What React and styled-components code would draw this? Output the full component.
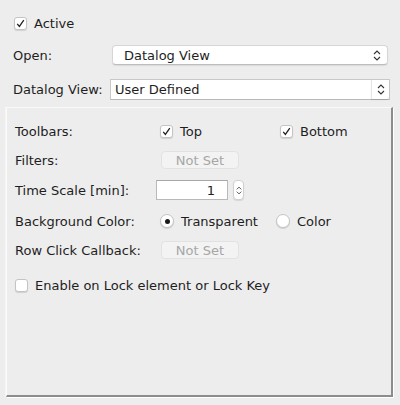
import React from 'react';
import styled, { createGlobalStyle, css } from 'styled-components';

const GlobalStyle = createGlobalStyle`
  html, body {
    margin: 0;
    padding: 0;
    background: #ededed;
  }
  body {
    font-family: 'DejaVu Sans', 'Liberation Sans', sans-serif;
    font-size: 13px;
    color: #1e1e1e;
  }
`;

const Page = styled.div`
  width: 400px;
  height: 405px;
  box-sizing: border-box;
  padding-top: 16px;
  display: flex;
  flex-direction: column;
`;

const Row = styled.div`
  display: flex;
  align-items: center;
  height: ${(p) => p.h || 20}px;
  margin-top: ${(p) => p.mt || 0}px;
  padding-left: ${(p) => p.pl || 0}px;
`;

const Label = styled.span`
  width: ${(p) => p.w}px;
  flex-shrink: 0;
  white-space: nowrap;
`;

const Text = styled.span`
  white-space: nowrap;
  margin-left: ${(p) => p.ml || 7}px;
`;

const boxBase = css`
  width: 13px;
  height: 13px;
  box-sizing: border-box;
  background: #fff;
  border: 1px solid #c4c4c4;
  box-shadow: 0 1px 1px rgba(0, 0, 0, 0.12);
  display: flex;
  align-items: center;
  justify-content: center;
  flex-shrink: 0;
`;

const Box = styled.span`
  ${boxBase};
  border-radius: 3px;
  margin-left: ${(p) => p.ml || 0}px;
`;

const Radio = styled.span`
  ${boxBase};
  width: 14px;
  height: 14px;
  border-radius: 50%;
  margin-left: ${(p) => p.ml || 0}px;
`;

const Dot = styled.span`
  width: 5px;
  height: 5px;
  border-radius: 50%;
  background: #1a1a1a;
`;

const Check = () => (
  <svg width="9" height="9" viewBox="0 0 9 9">
    <path d="M1.2 4.8 L3.4 7.4 L7.8 1.2" fill="none" stroke="#222" strokeWidth="1.3" />
  </svg>
);

const UpDown = ({ w = 8, h = 11 }) => (
  <svg width={w} height={h} viewBox="0 0 8 11">
    <path d="M1 4 L4 1 L7 4 M1 7 L4 10 L7 7" fill="none" stroke="#333" strokeWidth="1.1" />
  </svg>
);

const Popup = styled.div`
  margin-left: ${(p) => p.ml || 0}px;
  width: ${(p) => p.w}px;
  height: 20px;
  box-sizing: border-box;
  background: #fff;
  border-radius: 4px;
  border: 1px solid #d6d6d6;
  border-bottom-color: #bdbdbd;
  box-shadow: 0 1px 1px rgba(0, 0, 0, 0.08);
  display: flex;
  align-items: center;
  justify-content: space-between;
  padding: 0 6px 0 11px;
`;

const Combo = styled.div`
  margin-left: ${(p) => p.ml || 0}px;
  width: ${(p) => p.w}px;
  height: 21px;
  box-sizing: border-box;
  background: #fff;
  border: 1px solid #c8c8c8;
  border-bottom-color: #b8b8b8;
  display: flex;
  align-items: stretch;
`;

const ComboText = styled.div`
  flex: 1;
  display: flex;
  align-items: center;
  padding-left: 4px;
`;

const ComboArrow = styled.div`
  width: 17px;
  display: flex;
  align-items: center;
  justify-content: center;
  border-left: 1px solid #e6e6e6;
  border-radius: 0 3px 3px 0;
  box-shadow: 0 1px 1px rgba(0, 0, 0, 0.12);
`;

const Panel = styled.div`
  margin: 7px 0 0 6px;
  width: 387px;
  height: 290px;
  box-sizing: border-box;
  border-top: 1px solid #fafafa;
  border-left: 1px solid #fafafa;
  border-right: 2px solid #8c8c8c;
  border-bottom: 2px solid #8c8c8c;
  box-shadow: 1px 1px 0 #fff, -1px 0 0 #f6f6f6;
  padding: 13px 0 0 8px;
  display: flex;
  flex-direction: column;
`;

const Group = styled.div`
  display: flex;
  align-items: center;
  width: ${(p) => p.w}px;
`;

const DisabledButton = styled.div`
  margin-left: ${(p) => p.ml || 0}px;
  width: 78px;
  height: 18px;
  box-sizing: border-box;
  border-radius: 4px;
  background: #f3f3f3;
  border: 1px solid #e2e2e2;
  color: #a6a6a6;
  display: flex;
  align-items: center;
  justify-content: center;
`;

const Field = styled.div`
  margin-left: ${(p) => p.ml || 0}px;
  width: 72px;
  height: 20px;
  box-sizing: border-box;
  background: #fff;
  border: 1px solid #b9b9b9;
  border-top-color: #a8a8a8;
  display: flex;
  align-items: center;
  justify-content: flex-end;
  padding-right: 12px;
`;

const Stepper = styled.div`
  margin-left: 5px;
  width: 11px;
  height: 20px;
  box-sizing: border-box;
  background: #fff;
  border: 1px solid #d0d0d0;
  border-radius: 4px;
  box-shadow: 0 1px 1px rgba(0, 0, 0, 0.1);
  display: flex;
  align-items: center;
  justify-content: center;
`;

export default function App() {
  return (
    <>
      <GlobalStyle />
      <Page>
        <Row h={14} pl={14}>
          <Box><Check /></Box>
          <Text>Active</Text>
        </Row>
        <Row mt={15} pl={13}>
          <Label w={99}>Open:</Label>
          <Popup w={276}>
            <span>Datalog View</span>
            <UpDown />
          </Popup>
        </Row>
        <Row h={21} mt={14} pl={13}>
          <Label w={97}>Datalog View:</Label>
          <Combo w={280}>
            <ComboText>User Defined</ComboText>
            <ComboArrow><UpDown /></ComboArrow>
          </Combo>
        </Row>
        <Panel>
          <Row>
            <Label w={145}>Toolbars:</Label>
            <Group w={120}>
              <Box><Check /></Box>
              <Text>Top</Text>
            </Group>
            <Box><Check /></Box>
            <Text>Bottom</Text>
          </Row>
          <Row mt={9}>
            <Label w={145}>Filters:</Label>
            <DisabledButton ml={1}>Not Set</DisabledButton>
          </Row>
          <Row mt={10}>
            <Label w={141}>Time Scale [min]:</Label>
            <Field>1</Field>
            <Stepper><UpDown w={6} h={11} /></Stepper>
          </Row>
          <Row mt={11}>
            <Label w={145}>Background Color:</Label>
            <Group w={116}>
              <Radio><Dot /></Radio>
              <Text>Transparent</Text>
            </Group>
            <Radio />
            <Text>Color</Text>
          </Row>
          <Row mt={9}>
            <Label w={145}>Row Click Callback:</Label>
            <DisabledButton ml={1}>Not Set</DisabledButton>
          </Row>
          <Row mt={15}>
            <Box><span /></Box>
            <Text>Enable on Lock element or Lock Key</Text>
          </Row>
        </Panel>
      </Page>
    </>
  );
}
